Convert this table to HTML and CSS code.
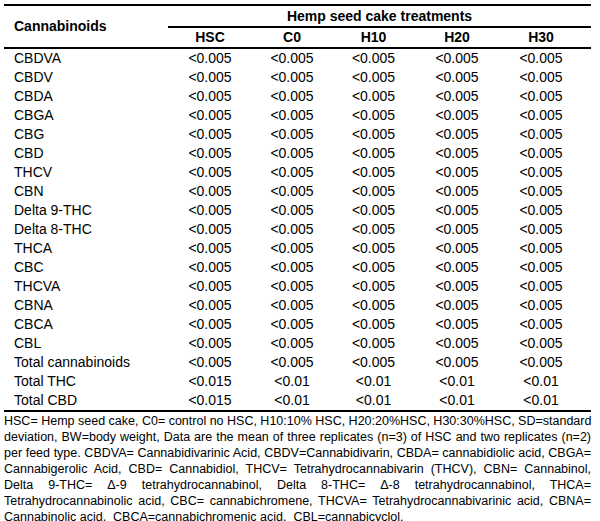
FILE: index.html
```html
<!DOCTYPE html>
<html>
<head>
<meta charset="utf-8">
<link rel="stylesheet" href="styles.css">
</head>
<body>
<div class="wrap">
<table class="tbl">
<colgroup>
<col class="c-name"><col class="c-a"><col class="c-b"><col class="c-c"><col class="c-d"><col class="c-e">
</colgroup>
<thead>
<tr class="h1"><th class="name" rowspan="2">Cannabinoids</th><th class="group" colspan="5">Hemp seed cake treatments</th></tr>
<tr class="h2"><th>HSC</th><th>C0</th><th>H10</th><th>H20</th><th class="last">H30</th></tr>
</thead>
<tbody>
<tr><td class="name">CBDVA</td><td>&lt;0.005</td><td>&lt;0.005</td><td>&lt;0.005</td><td>&lt;0.005</td><td class="last">&lt;0.005</td></tr>
<tr><td class="name">CBDV</td><td>&lt;0.005</td><td>&lt;0.005</td><td>&lt;0.005</td><td>&lt;0.005</td><td class="last">&lt;0.005</td></tr>
<tr><td class="name">CBDA</td><td>&lt;0.005</td><td>&lt;0.005</td><td>&lt;0.005</td><td>&lt;0.005</td><td class="last">&lt;0.005</td></tr>
<tr><td class="name">CBGA</td><td>&lt;0.005</td><td>&lt;0.005</td><td>&lt;0.005</td><td>&lt;0.005</td><td class="last">&lt;0.005</td></tr>
<tr><td class="name">CBG</td><td>&lt;0.005</td><td>&lt;0.005</td><td>&lt;0.005</td><td>&lt;0.005</td><td class="last">&lt;0.005</td></tr>
<tr><td class="name">CBD</td><td>&lt;0.005</td><td>&lt;0.005</td><td>&lt;0.005</td><td>&lt;0.005</td><td class="last">&lt;0.005</td></tr>
<tr><td class="name">THCV</td><td>&lt;0.005</td><td>&lt;0.005</td><td>&lt;0.005</td><td>&lt;0.005</td><td class="last">&lt;0.005</td></tr>
<tr><td class="name">CBN</td><td>&lt;0.005</td><td>&lt;0.005</td><td>&lt;0.005</td><td>&lt;0.005</td><td class="last">&lt;0.005</td></tr>
<tr><td class="name">Delta 9-THC</td><td>&lt;0.005</td><td>&lt;0.005</td><td>&lt;0.005</td><td>&lt;0.005</td><td class="last">&lt;0.005</td></tr>
<tr><td class="name">Delta 8-THC</td><td>&lt;0.005</td><td>&lt;0.005</td><td>&lt;0.005</td><td>&lt;0.005</td><td class="last">&lt;0.005</td></tr>
<tr><td class="name">THCA</td><td>&lt;0.005</td><td>&lt;0.005</td><td>&lt;0.005</td><td>&lt;0.005</td><td class="last">&lt;0.005</td></tr>
<tr><td class="name">CBC</td><td>&lt;0.005</td><td>&lt;0.005</td><td>&lt;0.005</td><td>&lt;0.005</td><td class="last">&lt;0.005</td></tr>
<tr><td class="name">THCVA</td><td>&lt;0.005</td><td>&lt;0.005</td><td>&lt;0.005</td><td>&lt;0.005</td><td class="last">&lt;0.005</td></tr>
<tr><td class="name">CBNA</td><td>&lt;0.005</td><td>&lt;0.005</td><td>&lt;0.005</td><td>&lt;0.005</td><td class="last">&lt;0.005</td></tr>
<tr><td class="name">CBCA</td><td>&lt;0.005</td><td>&lt;0.005</td><td>&lt;0.005</td><td>&lt;0.005</td><td class="last">&lt;0.005</td></tr>
<tr><td class="name">CBL</td><td>&lt;0.005</td><td>&lt;0.005</td><td>&lt;0.005</td><td>&lt;0.005</td><td class="last">&lt;0.005</td></tr>
<tr><td class="name">Total cannabinoids</td><td>&lt;0.005</td><td>&lt;0.005</td><td>&lt;0.005</td><td>&lt;0.005</td><td class="last">&lt;0.005</td></tr>
<tr><td class="name">Total THC</td><td>&lt;0.015</td><td>&lt;0.01</td><td>&lt;0.01</td><td>&lt;0.01</td><td class="last">&lt;0.01</td></tr>
<tr><td class="name">Total CBD</td><td>&lt;0.015</td><td>&lt;0.01</td><td>&lt;0.01</td><td>&lt;0.01</td><td class="last">&lt;0.01</td></tr>
</tbody>
</table>
<div class="note">
<span class="ln">HSC= Hemp seed cake, C0= control no HSC, H10:10% HSC, H20:20%HSC, H30:30%HSC, SD=standard</span>
<span class="ln">deviation, BW=body weight, Data are the mean of three replicates (n=3) of HSC and two replicates (n=2)</span>
<span class="ln">per feed type. CBDVA= Cannabidivarinic Acid, CBDV=Cannabidivarin, CBDA= cannabidiolic acid, CBGA=</span>
<span class="ln">Cannabigerolic Acid, CBD= Cannabidiol, THCV= Tetrahydrocannabivarin (THCV), CBN= Cannabinol,</span>
<span class="ln">Delta 9-THC= Δ-9 tetrahydrocannabinol, Delta 8-THC= Δ-8 tetrahydrocannabinol, THCA=</span>
<span class="ln">Tetrahydrocannabinolic acid, CBC= cannabichromene, THCVA= Tetrahydrocannabivarinic acid, CBNA=</span>
<span class="ln lastln">Cannabinolic acid,&nbsp; CBCA=cannabichromenic acid,&nbsp; CBL=cannabicyclol.</span>
</div>
</div>
</body>
</html>
```
FILE: styles.css
```css
html, body {
  margin: 0;
  padding: 0;
  background: #ffffff;
}
body {
  font-family: "Liberation Sans", Arial, sans-serif;
  font-size: 14px;
  color: #000;
}
.wrap {
  padding: 4px 9px 0 4px;
}
.tbl {
  width: 587px;
  border-collapse: collapse;
  table-layout: fixed;
  border-top: 2px solid #000;
  border-bottom: 2px solid #000;
}
.c-name { width: 164px; }
.c-a { width: 84px; }
.c-b { width: 80px; }
.c-c { width: 83px; }
.c-d { width: 84px; }
.c-e { width: 92px; }
.tbl th, .tbl td {
  padding: 0;
  text-align: center;
  white-space: nowrap;
}
.tbl th {
  font-weight: bold;
}
.tbl th.name {
  text-align: left;
  padding-left: 10px;
  vertical-align: middle;
  border-bottom: 2px solid #000;
}
.h1 th {
  line-height: 19px;
  vertical-align: bottom;
}
.h1 th.group {
  border-bottom: 2px solid #000;
  padding-top: 1px;
}
.h2 th {
  line-height: 19px;
  border-bottom: 2px solid #000;
  vertical-align: middle;
}
.tbl td {
  line-height: 19px;
}
.tbl td.name {
  text-align: left;
  padding-left: 10px;
}
.tbl .last {
  padding-right: 8px;
}
.note {
  margin-top: 1px;
  width: 587px;
  font-size: 12.5px;
  line-height: 16px;
}
.ln {
  display: block;
  white-space: nowrap;
  text-align: justify;
  text-align-last: justify;
}
.lastln {
  text-align-last: left;
}
```
